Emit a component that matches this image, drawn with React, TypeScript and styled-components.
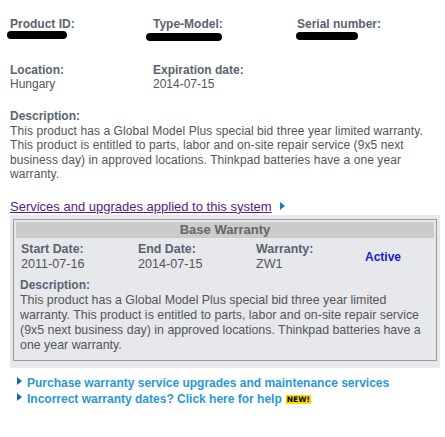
import React from "react";
import styled, { createGlobalStyle } from "styled-components";

const GlobalStyle = createGlobalStyle`
  body {
    margin: 0;
    background: #fff;
    font-family: "Liberation Sans", Arial, sans-serif;
    font-size: 12px;
    color: #555;
  }
`;

const Page = styled.div`
  padding: 17px 5px 0 10px;
  width: 445px;
  box-sizing: border-box;
`;

const InfoGrid = styled.div`
  display: grid;
  grid-template-columns: 143px 144px 1fr;
  row-gap: 18px;
`;

const Field = styled.div`
  line-height: 14px;
  min-height: 28px;
`;

const Label = styled.div`
  font-weight: bold;
  color: #5a6370;
`;

const Value = styled.div`
  position: relative;
  color: #555;
  height: 14px;
`;

const Redacted = styled.span<{ $w: number; $l: number; $t: number }>`
  position: absolute;
  left: ${(p) => p.$l}px;
  top: ${(p) => p.$t}px;
  width: ${(p) => p.$w}px;
  height: 8px;
  background: #000;
  border-radius: 4px;
`;

const Description = styled.div`
  margin-top: 18px;
  line-height: 14.6px;
`;

const Paragraph = styled.p`
  margin: 0;
  color: #555;
  letter-spacing: 0.08px;
`;

const SectionRow = styled.div`
  margin-top: 17px;
  display: flex;
  align-items: center;
  gap: 8px;
  line-height: 15px;
`;

const SectionLink = styled.a`
  color: #551a8b;
  font-size: 13px;
  text-decoration: underline;
  cursor: pointer;
`;

const Arrow = styled.span<{ $color: string }>`
  display: inline-block;
  flex: none;
  width: 0;
  height: 0;
  border-top: 4px solid transparent;
  border-bottom: 4px solid transparent;
  border-left: 5px solid ${(p) => p.$color};
`;

const Panel = styled.div`
  margin-top: 1px;
  background: #e6e8ec;
  padding: 4px 3px 7px 3px;
  width: 430px;
  box-sizing: border-box;
`;

const WarrantyBox = styled.div`
  border: 1px solid #999;
  padding: 2px;
`;

const BoxHeader = styled.div`
  background: #cbcbcb;
  text-align: center;
  font-weight: bold;
  font-size: 13px;
  color: #666;
  line-height: 16px;
`;

const BoxBody = styled.div`
  padding: 4px 4px 5px 4px;
`;

const DateRow = styled.div`
  display: grid;
  grid-template-columns: 117px 118px 110px 1fr;
  line-height: 15px;
  font-size: 12.6px;
`;

const DateCell = styled.div`
  padding-left: 1px;
`;

const DateLabel = styled.div`
  font-weight: bold;
  font-size: 12.4px;
  color: #5a6370;
`;

const Status = styled.div`
  color: #1a1adb;
  font-weight: bold;
  font-size: 12px;
  align-self: center;
  padding-top: 1px;
`;

const BoxDescription = styled.div`
  margin-top: 6px;
  line-height: 15px;
`;

const BoxParagraph = styled.p`
  margin: 0;
  font-size: 12.4px;
  color: #555;
`;

const Links = styled.div`
  margin-top: 8px;
  padding-left: 7px;
  display: flex;
  flex-direction: column;
  gap: 1px;
`;

const LinkRow = styled.div`
  display: flex;
  align-items: flex-start;
  gap: 5px;
  line-height: 15px;
  ${Arrow} {
    margin-top: 1px;
  }
`;

const BlueLink = styled.a`
  color: #2a98d8;
  font-weight: bold;
  text-decoration: none;
  cursor: pointer;
`;

const NewBadge = styled.span`
  display: inline-block;
  margin-left: 4px;
  background: #ffd800;
  color: #000;
  font-family: "DejaVu Sans", sans-serif;
  font-size: 7.5px;
  font-weight: bold;
  line-height: 9px;
  padding: 0 1px;
  vertical-align: 1px;
`;

const descriptionText =
  "This product has a Global Model Plus special bid three year limited warranty. This product is entitled to parts, labor and on-site repair service (9x5 next business day) in approved locations. Thinkpad batteries have a one year warranty.";

export default function App() {
  return (
    <Page>
      <GlobalStyle />
      <InfoGrid>
        <Field>
          <Label>Product ID:</Label>
          <Value>
            <Redacted $l={-3} $t={0} $w={60} />
          </Value>
        </Field>
        <Field>
          <Label>Type-Model:</Label>
          <Value>
            <Redacted $l={-7} $t={2} $w={76} />
          </Value>
        </Field>
        <Field>
          <Label>Serial number:</Label>
          <Value>
            <Redacted $l={-1} $t={1} $w={62} />
          </Value>
        </Field>
        <Field>
          <Label>Location:</Label>
          <Value>Hungary</Value>
        </Field>
        <Field>
          <Label>Expiration date:</Label>
          <Value>2014-07-15</Value>
        </Field>
      </InfoGrid>

      <Description>
        <Label>Description:</Label>
        <Paragraph>{descriptionText}</Paragraph>
      </Description>

      <SectionRow>
        <SectionLink>Services and upgrades applied to this system</SectionLink>
        <Arrow $color="#1a7ac0" />
      </SectionRow>

      <Panel>
        <WarrantyBox>
          <BoxHeader>Base Warranty</BoxHeader>
          <BoxBody>
            <DateRow>
              <DateCell>
                <DateLabel>Start Date:</DateLabel>
                <div>2011-07-16</div>
              </DateCell>
              <DateCell>
                <DateLabel>End Date:</DateLabel>
                <div>2014-07-15</div>
              </DateCell>
              <DateCell>
                <DateLabel>Warranty:</DateLabel>
                <div>ZW1</div>
              </DateCell>
              <Status>Active</Status>
            </DateRow>
            <BoxDescription>
              <Label>Description:</Label>
              <BoxParagraph>{descriptionText}</BoxParagraph>
            </BoxDescription>
          </BoxBody>
        </WarrantyBox>
      </Panel>

      <Links>
        <LinkRow>
          <Arrow $color="#1a6aa8" />
          <BlueLink>Purchase warranty service upgrades and maintenance services</BlueLink>
        </LinkRow>
        <LinkRow>
          <Arrow $color="#1a6aa8" />
          <BlueLink>
            Incorrect warranty dates? Click here for help
            <NewBadge>NEW!</NewBadge>
          </BlueLink>
        </LinkRow>
      </Links>
    </Page>
  );
}
